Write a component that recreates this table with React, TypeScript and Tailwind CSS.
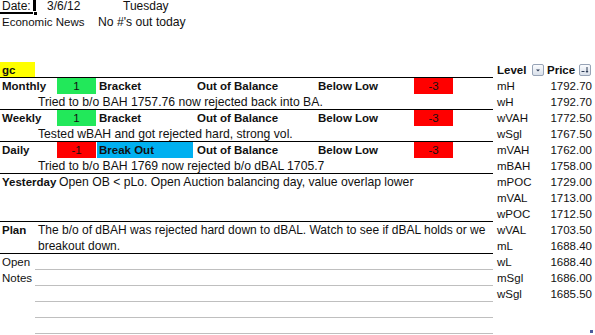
import React from "react";

const FilterBtn = ({ sort }: { sort?: boolean }) => (
  <div className="w-3 h-3 border border-[#97a3b6] rounded-[2px] bg-gradient-to-b from-[#fbfcfe] to-[#d9e0ea] flex items-center justify-center">
    {sort ? (
      <svg width="10" height="10" viewBox="0 0 10 10">
        <path d="M1.5 6.5h3" stroke="#2b3a55" strokeWidth="1" />
        <path d="M7 2v5" stroke="#2b3a55" strokeWidth="1" />
        <path d="M5.5 6h3L7 8z" fill="#2b3a55" />
      </svg>
    ) : (
      <svg width="10" height="10" viewBox="0 0 10 10">
        <path d="M3 4.5h4L5 6.5z" fill="#2b3a55" />
      </svg>
    )}
  </div>
);

const levels: [string, string][] = [
  ["mH", "1792.70"],
  ["wH", "1792.70"],
  ["wVAH", "1772.50"],
  ["wSgl", "1767.50"],
  ["mVAH", "1762.00"],
  ["mBAH", "1758.00"],
  ["mPOC", "1729.00"],
  ["mVAL", "1713.00"],
  ["wPOC", "1712.50"],
  ["wVAL", "1703.50"],
  ["mL", "1688.40"],
  ["wL", "1688.40"],
  ["mSgl", "1686.00"],
  ["wSgl", "1685.50"],
];

const TrendRow = ({
  label,
  value,
  valueBg,
  state,
  stateBg,
}: {
  label: string;
  value: string;
  valueBg: string;
  state: string;
  stateBg?: boolean;
}) => (
  <div className="flex h-4">
    <div className="w-[57px] pl-[2px] font-bold">{label}</div>
    <div className={`w-[39px] text-center ${valueBg}`}>{value}</div>
    {stateBg ? (
      <div className="w-[98px] flex">
        <div className="w-px" />
        <div className="w-[96px] bg-[#00b0f0] pl-[2px] font-bold">{state}</div>
      </div>
    ) : (
      <div className="w-[98px] pl-[3px] font-bold">{state}</div>
    )}
    <div className="w-[104px] pl-[3px] font-bold">Out of Balance</div>
    <div className="w-[100px] text-center font-bold">Below Low</div>
    <div className="w-[16px]" />
    <div className="w-[39px] text-center bg-[#ff0000]">-3</div>
  </div>
);

const Comment = ({ text }: { text: string }) => (
  <div className="flex h-4 border-b border-black">
    <div className="pl-[38px] whitespace-nowrap text-[12.2px]">{text}</div>
  </div>
);

export default function App() {
  return (
    <div className="w-[595px] h-[335px] overflow-hidden bg-white text-[#111] text-[11.5px] leading-4 font-['Liberation_Sans',Arial,sans-serif] relative">
      <div className="flex -mt-[2px]">
        {/* Left sheet area */}
        <div className="w-[493px] flex flex-col">
          {/* Row 1 */}
          <div className="flex h-4 text-[12px]">
            <div className="w-[35px] relative pl-[2px]">
              Date:
              <div className="absolute left-0 top-[14px] w-[33px] h-[2px] bg-black" />
              <div className="absolute left-[33px] top-0 w-[3px] h-[15px] bg-black" />
              <div className="absolute left-[33px] top-[13px] w-[5px] h-[5px] bg-black border border-white" />
            </div>
            <div className="w-[88px] pl-[12px]">3/6/12</div>
            <div>Tuesday</div>
          </div>
          {/* Row 2 */}
          <div className="flex h-4 text-[12px]">
            <div className="w-[98px] pl-[2px] text-[11.5px]">Economic News</div>
            <div className="text-[12.2px]">No #'s out today</div>
          </div>
          <div className="h-4" />
          <div className="h-4" />
          {/* Row 5 */}
          <div className="flex h-4 border-b border-black">
            <div className="w-[35px] h-[15px] bg-[#ffff00] pl-[2px] font-bold">gc</div>
          </div>
          <TrendRow label="Monthly" value="1" valueBg="bg-[#22e85a]" state="Bracket" />
          <Comment text="Tried to b/o BAH 1757.76 now rejected back into BA." />
          <TrendRow label="Weekly" value="1" valueBg="bg-[#22e85a]" state="Bracket" />
          <Comment text="Tested wBAH and got rejected hard, strong vol." />
          <TrendRow label="Daily" value="-1" valueBg="bg-[#ff0000]" state="Break Out" stateBg />
          <Comment text="Tried to b/o BAH 1769 now rejected b/o dBAL 1705.7" />
          {/* Yesterday */}
          <div className="flex flex-col h-12 border-b border-black">
            <div className="flex h-4">
              <div className="w-[57px] pl-[2px] font-bold">Yesterday</div>
              <div className="pl-[2px] whitespace-nowrap text-[12.2px]">
                Open OB &lt; pLo. Open Auction balancing day, value overlap lower
              </div>
            </div>
          </div>
          {/* Plan */}
          <div className="flex h-8 border-b border-black">
            <div className="w-[35px] pl-[2px] font-bold">Plan</div>
            <div className="pl-[3px] w-[456px] text-[12px]">
              <div className="h-4 whitespace-nowrap">
                The b/o of dBAH was rejected hard down to dBAL. Watch to see if dBAL holds or we
              </div>
              <div className="h-4">breakout down.</div>
            </div>
          </div>
          {/* Open notes */}
          {["Open", "Notes", "", "", ""].map((t, i) => (
            <div key={i} className="flex h-4">
              <div className="w-[35px] pl-[2px]">{t}</div>
              <div className="flex-1 border-b border-[#bfbfbf]" />
            </div>
          ))}
        </div>
        {/* Right table */}
        <div className="w-[102px] flex flex-col">
          <div className="h-4" />
          <div className="h-4" />
          <div className="h-4" />
          <div className="h-4" />
          <div className="flex h-4 items-center">
            <div className="w-[52px] flex items-center pl-[4px]">
              <span className="font-bold w-[35px]">Level</span>
              <FilterBtn />
            </div>
            <div className="w-[50px] flex items-center pl-[2px]">
              <span className="font-bold w-[32px]">Price</span>
              <FilterBtn sort />
            </div>
          </div>
          {levels.map(([l, p], i) => (
            <div key={i} className="flex h-4">
              <div className="w-[52px] pl-[4px]">{l}</div>
              <div className="w-[50px] text-right pr-[3px]">{p}</div>
            </div>
          ))}
        </div>
      </div>
      <div className="absolute right-[2px] bottom-[2px] w-[3px] h-[3px] bg-[#4b5a9c]" />
    </div>
  );
}
